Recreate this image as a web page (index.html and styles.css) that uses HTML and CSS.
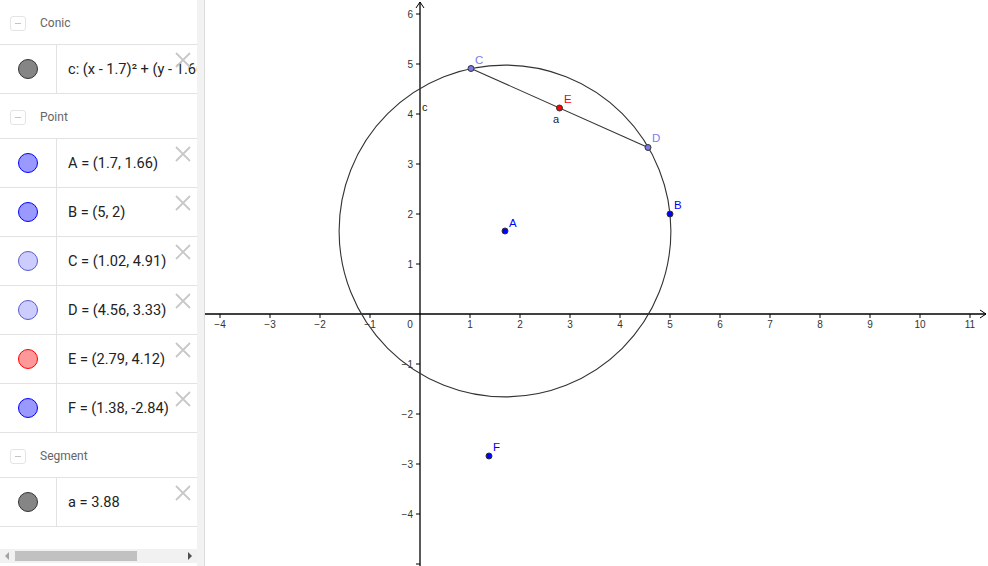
FILE: index.html
```html
<!DOCTYPE html>
<html>
<head>
<meta charset="utf-8">
<title>Graphing</title>
<link rel="stylesheet" href="styles.css">
</head>
<body>
<div class="app">
  <div class="algebra">
    <div class="list">
      <div class="group-header"><span class="toggle"></span><span class="group-title">Conic</span></div>
      <div class="item">
        <div class="marble-cell"><span class="marble m-conic"></span></div>
        <div class="item-text">c: (x - 1.7)² + (y - 1.66)² = 11.01</div>
        <svg class="delete" viewBox="0 0 16 16"><path d="M1 1L15 15M15 1L1 15"/></svg>
      </div>
      <div class="group-header"><span class="toggle"></span><span class="group-title">Point</span></div>
      <div class="item">
        <div class="marble-cell"><span class="marble m-blue"></span></div>
        <div class="item-text">A = (1.7, 1.66)</div>
        <svg class="delete" viewBox="0 0 16 16"><path d="M1 1L15 15M15 1L1 15"/></svg>
      </div>
      <div class="item">
        <div class="marble-cell"><span class="marble m-blue"></span></div>
        <div class="item-text">B = (5, 2)</div>
        <svg class="delete" viewBox="0 0 16 16"><path d="M1 1L15 15M15 1L1 15"/></svg>
      </div>
      <div class="item">
        <div class="marble-cell"><span class="marble m-light"></span></div>
        <div class="item-text">C = (1.02, 4.91)</div>
        <svg class="delete" viewBox="0 0 16 16"><path d="M1 1L15 15M15 1L1 15"/></svg>
      </div>
      <div class="item">
        <div class="marble-cell"><span class="marble m-light"></span></div>
        <div class="item-text">D = (4.56, 3.33)</div>
        <svg class="delete" viewBox="0 0 16 16"><path d="M1 1L15 15M15 1L1 15"/></svg>
      </div>
      <div class="item">
        <div class="marble-cell"><span class="marble m-red"></span></div>
        <div class="item-text">E = (2.79, 4.12)</div>
        <svg class="delete" viewBox="0 0 16 16"><path d="M1 1L15 15M15 1L1 15"/></svg>
      </div>
      <div class="item">
        <div class="marble-cell"><span class="marble m-blue"></span></div>
        <div class="item-text">F = (1.38, -2.84)</div>
        <svg class="delete" viewBox="0 0 16 16"><path d="M1 1L15 15M15 1L1 15"/></svg>
      </div>
      <div class="group-header"><span class="toggle"></span><span class="group-title">Segment</span></div>
      <div class="item">
        <div class="marble-cell"><span class="marble m-conic"></span></div>
        <div class="item-text">a = 3.88</div>
        <svg class="delete" viewBox="0 0 16 16"><path d="M1 1L15 15M15 1L1 15"/></svg>
      </div>
    </div>
    <div class="hscroll">
      <span class="arrow-left"></span>
      <span class="thumb"></span>
      <span class="arrow-right"></span>
    </div>
  </div>
  <div class="splitter"></div>
  <svg class="graphics" viewBox="205 0 783 566" width="783" height="566">
    <g class="axes">
      <line x1="205" y1="314" x2="986" y2="314"/>
      <line x1="420" y1="2" x2="420" y2="566"/>
      <path class="arrow" d="M980 310L986 314L980 318"/>
      <path class="arrow" d="M416 8L420 2L424 8"/>
      <path class="ticks" d="M220 314v4M270 314v4M320 314v4M370 314v4M470 314v4M520 314v4M570 314v4M620 314v4M670 314v4M720 314v4M770 314v4M820 314v4M870 314v4M920 314v4M970 314v4M416 14h4M416 64h4M416 114h4M416 164h4M416 214h4M416 264h4M416 364h4M416 414h4M416 464h4M416 514h4M416 564h4"/>
    </g>
    <g class="xlabels">
      <text x="220" y="328">−4</text>
      <text x="270" y="328">−3</text>
      <text x="320" y="328">−2</text>
      <text x="370" y="328">−1</text>
      <text x="410" y="328">0</text>
      <text x="470" y="328">1</text>
      <text x="520" y="328">2</text>
      <text x="570" y="328">3</text>
      <text x="620" y="328">4</text>
      <text x="670" y="328">5</text>
      <text x="720" y="328">6</text>
      <text x="770" y="328">7</text>
      <text x="820" y="328">8</text>
      <text x="870" y="328">9</text>
      <text x="920" y="328">10</text>
      <text x="970" y="328">11</text>
    </g>
    <g class="ylabels">
      <text x="413" y="18">6</text>
      <text x="413" y="68">5</text>
      <text x="413" y="118">4</text>
      <text x="413" y="168">3</text>
      <text x="413" y="218">2</text>
      <text x="413" y="268">1</text>
      <text x="413" y="368">−1</text>
      <text x="413" y="418">−2</text>
      <text x="413" y="468">−3</text>
      <text x="413" y="518">−4</text>
    </g>
    <circle class="conic" cx="505" cy="231" r="165.9"/>
    <line class="segment" x1="471" y1="68.5" x2="648" y2="147.5"/>
    <text class="obj-label" x="422" y="111">c</text>
    <text class="obj-label" x="553" y="123">a</text>
    <circle class="pt pt-blue" cx="505" cy="231" r="3"/>
    <circle class="pt pt-blue" cx="670" cy="214" r="3"/>
    <circle class="pt pt-light" cx="471" cy="68.5" r="3"/>
    <circle class="pt pt-light" cx="648" cy="147.5" r="3"/>
    <circle class="pt pt-red" cx="559.5" cy="108" r="3"/>
    <circle class="pt pt-blue" cx="489" cy="456" r="3"/>
    <text class="pt-label lb-blue" x="509" y="227">A</text>
    <text class="pt-label lb-blue" x="674" y="209">B</text>
    <text class="pt-label lb-light" x="475" y="64">C</text>
    <text class="pt-label lb-light" x="652" y="142">D</text>
    <text class="pt-label lb-red" x="564" y="103">E</text>
    <text class="pt-label lb-blue" x="493" y="451">F</text>
  </svg>
</div>
</body>
</html>
```
FILE: styles.css
```css
html, body {
  margin: 0;
  padding: 0;
  background: #ffffff;
}

.app {
  display: flex;
  width: 988px;
  height: 566px;
  overflow: hidden;
}

.algebra {
  width: 197px;
  flex: none;
  display: flex;
  flex-direction: column;
  overflow: hidden;
  background: #ffffff;
}

.list {
  flex: 1;
  display: flex;
  flex-direction: column;
}

.group-header {
  height: 45px;
  box-sizing: border-box;
  border-bottom: 1px solid #e2e2e2;
  display: flex;
  align-items: center;
  padding-left: 10px;
  padding-top: 2px;
  gap: 14px;
}

.toggle {
  width: 16px;
  height: 15px;
  box-sizing: border-box;
  border: 1px solid #e4e4e4;
  border-radius: 3px;
  position: relative;
  flex: none;
}

.toggle::after {
  content: "";
  position: absolute;
  left: 4px;
  right: 4px;
  top: 6px;
  height: 1px;
  background: #c4c4c4;
}

.group-title {
  font-family: Roboto, "Liberation Sans", sans-serif;
  font-size: 12px;
  color: #666666;
}

.item {
  height: 49px;
  box-sizing: border-box;
  border-bottom: 1px solid #e2e2e2;
  display: flex;
  align-items: stretch;
  position: relative;
}

.marble-cell {
  width: 57px;
  flex: none;
  box-sizing: border-box;
  border-right: 1px solid #e2e2e2;
  display: flex;
  align-items: center;
  justify-content: center;
  padding-right: 1px;
}

.marble {
  width: 20px;
  height: 20px;
  box-sizing: border-box;
  border-radius: 50%;
  border: 1px solid #333333;
}

.m-conic { background: #858585; border-color: #333333; }
.m-blue { background: #9999ff; border-color: #0000ff; }
.m-light { background: #ccccff; border-color: #5c5cc8; }
.m-red { background: #ff9999; border-color: #ff0000; }

.item-text {
  flex: none;
  display: flex;
  align-items: center;
  padding-left: 11px;
  white-space: nowrap;
  font-family: Roboto, "Liberation Sans", sans-serif;
  font-size: 14.6px;
  color: #222222;
}

.delete {
  position: absolute;
  right: 6px;
  top: 7px;
  width: 16px;
  height: 16px;
  fill: none;
  stroke: #c8c8c8;
  stroke-width: 1.8;
}

.hscroll {
  height: 14px;
  margin-bottom: 3px;
  background: #f1f1f1;
  display: flex;
  align-items: center;
  padding: 0 5px;
  box-sizing: border-box;
}

.arrow-left {
  width: 0;
  height: 0;
  border-top: 4px solid transparent;
  border-bottom: 4px solid transparent;
  border-right: 4px solid #a3a3a3;
  flex: none;
}

.thumb {
  margin-left: 6px;
  width: 122px;
  height: 10px;
  background: #c1c1c1;
  flex: none;
}

.arrow-right {
  margin-left: auto;
  width: 0;
  height: 0;
  border-top: 4px solid transparent;
  border-bottom: 4px solid transparent;
  border-left: 4px solid #505050;
  flex: none;
}

.splitter {
  width: 7px;
  flex: none;
  background: #f2f2f2;
  border-right: 1px solid #dddddd;
}

.graphics {
  flex: none;
  display: block;
  background: #ffffff;
}

.axes line {
  stroke: #000000;
  stroke-width: 1.3;
}

.axes .arrow {
  fill: none;
  stroke: #000000;
  stroke-width: 1;
}

.axes .ticks {
  fill: none;
  stroke: #000000;
  stroke-width: 1;
}

.xlabels text, .ylabels text {
  font-family: "Liberation Sans", Arial, sans-serif;
  font-size: 10px;
  fill: #333333;
}

.xlabels text { text-anchor: middle; }
.ylabels text { text-anchor: end; }

.conic, .segment {
  fill: none;
  stroke: #333333;
  stroke-width: 1.1;
}

.obj-label {
  font-family: "Liberation Sans", Arial, sans-serif;
  font-size: 11px;
  fill: #222222;
}

.pt {
  stroke: #333333;
  stroke-width: 1;
}

.pt-blue { fill: #0000ff; }
.pt-light { fill: #7878e8; }
.pt-red { fill: #ff0000; }

.pt-label {
  font-family: "Liberation Sans", Arial, sans-serif;
  font-size: 11.5px;
}

.lb-blue { fill: #0000ff; }
.lb-light { fill: #7b7bf0; }
.lb-red { fill: #ff0000; }
```
